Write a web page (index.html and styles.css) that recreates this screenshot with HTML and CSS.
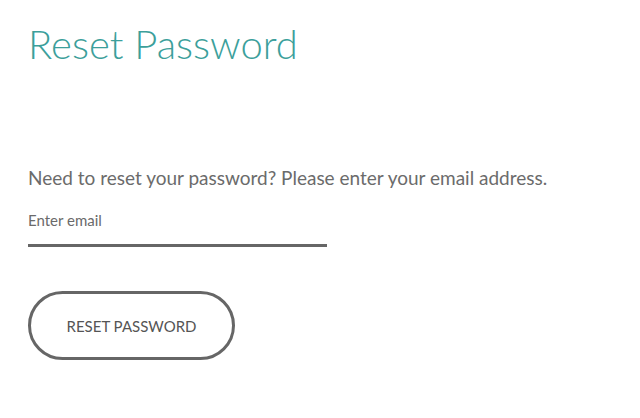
FILE: index.html
```html
<!DOCTYPE html>
<html>
<head>
<meta charset="utf-8">
<link rel="stylesheet" href="styles.css">
</head>
<body>
<main class="page">
  <h1 class="title">Reset Password</h1>
  <p class="intro">Need to reset your password? Please enter your email address.</p>
  <label class="field">
    <input class="field-input" type="email" placeholder="Enter email">
  </label>
  <button class="btn" type="button">RESET PASSWORD</button>
</main>
</body>
</html>
```
FILE: styles.css
```css
html, body {
  margin: 0;
  padding: 0;
  background: #fff;
}
.page {
  padding: 20px 28px 0 28px;
  font-family: "Lato", "Noto Sans", sans-serif;
  display: flex;
  flex-direction: column;
  align-items: flex-start;
}
.title {
  margin: 0;
  font-weight: 300;
  font-size: 40px;
  line-height: 48px;
  color: #3c9f9b;
}
.intro {
  margin: 98px 0 0 0;
  font-size: 19px;
  line-height: 24px;
  font-weight: 400;
  color: #6b6b6b;
}
.field {
  display: block;
  margin-top: 17px;
}
.field-input {
  display: block;
  width: 299px;
  box-sizing: border-box;
  border: none;
  border-bottom: 3px solid #666;
  padding: 4px 0 15px 0;
  font-family: inherit;
  font-size: 15px;
  color: #555;
  outline: none;
  background: transparent;
}
.field-input::placeholder {
  color: #6a6a6a;
}
.btn {
  margin-top: 44px;
  width: 207px;
  height: 69px;
  box-sizing: border-box;
  border: 3px solid #666;
  border-radius: 35px;
  background: #fff;
  font-family: inherit;
  font-size: 15px;
  color: #555;
  letter-spacing: 0;
}
```
